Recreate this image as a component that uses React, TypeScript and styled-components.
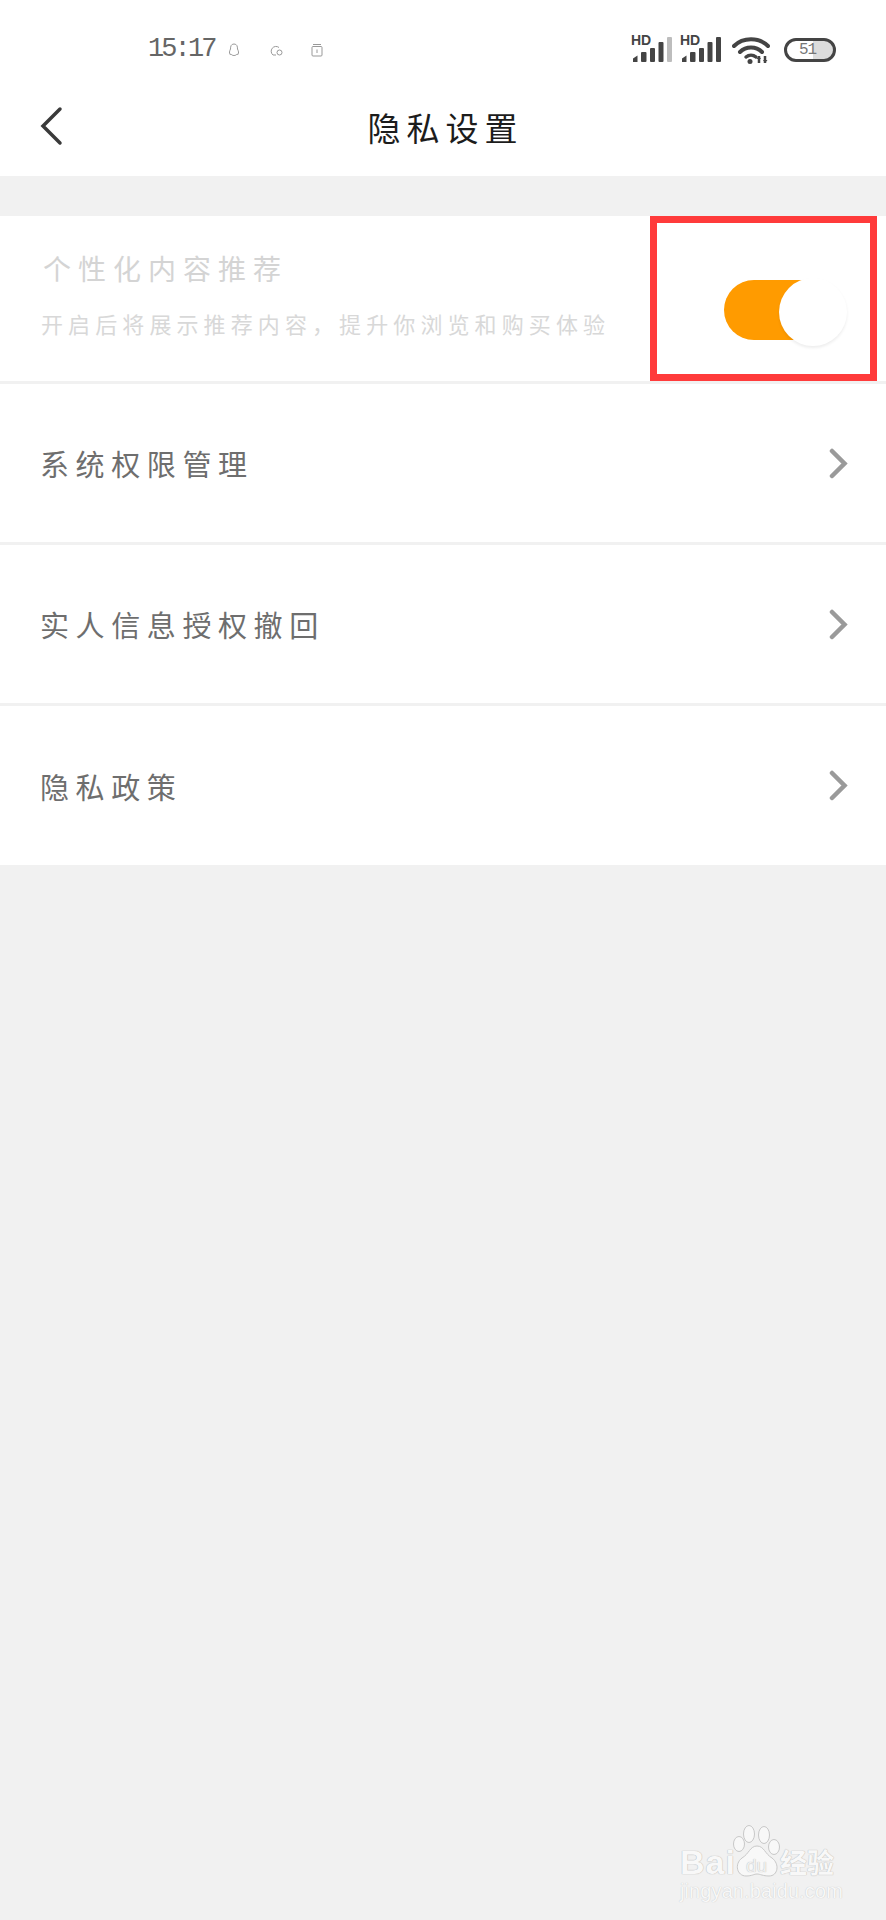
import React from "react";
import styled, { createGlobalStyle } from "styled-components";

const CJK = '"Noto Sans CJK SC", "Noto Sans", sans-serif';

const Global = createGlobalStyle`
  html, body { margin: 0; padding: 0; background: #f1f1f1; }
  body { font-family: ${CJK}; }
`;

const Page = styled.div`
  position: relative;
  width: 886px;
  height: 1920px;
  overflow: hidden;
  background: #f1f1f1;
`;

const TopArea = styled.header`
  background: #fff;
  height: 176px;
  display: flex;
  flex-direction: column;
`;

const StatusBar = styled.div`
  height: 72px;
  padding: 27px 50px 0 148px;
  box-sizing: border-box;
  display: flex;
  align-items: center;
`;

const Clock = styled.span`
  font-family: "Liberation Mono", monospace;
  font-size: 27px;
  line-height: 1;
  letter-spacing: -2.9px;
  color: #666;
  width: 82px;
`;

const TinyIcons = styled.div`
  display: flex;
  align-items: center;
  gap: 28px;
  margin-left: -2px;
`;

const StatusRight = styled.div`
  margin-left: auto;
  display: flex;
  align-items: center;
`;

const SignalWrap = styled.div<{ $gap: number }>`
  position: relative;
  width: 39px;
  height: 26px;
  margin-right: ${(p) => p.$gap}px;
`;

const HdLabel = styled.span`
  position: absolute;
  left: -2px;
  top: -4px;
  font-family: "Liberation Sans", sans-serif;
  font-weight: 700;
  font-size: 14px;
  line-height: 15px;
  color: #444;
`;

const Battery = styled.div`
  width: 52px;
  height: 24px;
  box-sizing: border-box;
  margin-left: 14px;
  border: 3px solid #444;
  border-radius: 12px;
  overflow: hidden;
  display: flex;
  align-items: center;
  background: linear-gradient(to right, #fff 0 56%, #dcdcdc 56% 100%);
`;

const BatteryText = styled.span`
  font-family: "Liberation Mono", monospace;
  font-size: 16px;
  line-height: 1;
  letter-spacing: -1px;
  color: #777;
  margin-left: 12px;
`;

const NavBar = styled.div`
  flex: 1;
  position: relative;
  display: flex;
  align-items: center;
  justify-content: center;
  padding-top: 6px;
  box-sizing: border-box;
`;

const BackButton = styled.div`
  position: absolute;
  left: 40px;
  top: 34px;
  width: 24px;
  height: 40px;
  display: flex;
`;

const PageTitle = styled.h1`
  margin: 0 0 0 5px;
  font-size: 33px;
  font-weight: 400;
  line-height: 40px;
  letter-spacing: 6px;
  color: #1c1c1c;
  font-family: ${CJK};
`;

const List = styled.main`
  margin-top: 40px;
  display: flex;
  flex-direction: column;
  gap: 3px;
`;

const Row = styled.div<{ $height: number }>`
  height: ${(p) => p.$height}px;
  background: #fff;
  display: flex;
  align-items: center;
  justify-content: space-between;
  box-sizing: border-box;
  padding: 0 38px 0 40px;
`;

const RowLabel = styled.span`
  font-size: 29px;
  line-height: 36px;
  letter-spacing: 6.6px;
  font-weight: 400;
  color: #6e6e6e;
`;

const ToggleRow = styled(Row)`
  padding: 0 37px 0 41px;
`;

const RowText = styled.div`
  display: flex;
  flex-direction: column;
  margin-top: -11px;
`;

const DisabledTitle = styled.span`
  margin-left: 2px;
  font-size: 28px;
  line-height: 36px;
  letter-spacing: 7px;
  color: #d4d4d4;
`;

const DisabledSub = styled.span`
  margin-top: 23px;
  font-size: 22px;
  line-height: 28px;
  letter-spacing: 5.1px;
  color: #d8d8d8;
  white-space: nowrap;
`;

const Toggle = styled.div`
  position: relative;
  width: 125px;
  height: 60px;
  margin-top: 22px;
`;

const Track = styled.div`
  width: 90px;
  height: 60px;
  border-radius: 30px 0 0 30px;
  background: #ff9b00;
`;

const Thumb = styled.div`
  position: absolute;
  left: 55px;
  top: -2px;
  width: 68px;
  height: 68px;
  border-radius: 50%;
  background: #fff;
  box-shadow: 0 2px 3px rgba(0, 0, 0, 0.07);
`;

const Highlight = styled.div`
  position: absolute;
  left: 650px;
  top: 216px;
  width: 227px;
  height: 165px;
  box-sizing: border-box;
  border: 7px solid #ff3b3b;
  pointer-events: none;
`;

const Watermark = styled.div`
  position: absolute;
  left: 680px;
  top: 1824px;
  width: 160px;
  height: 78px;
`;

const WmBai = styled.span`
  position: absolute;
  left: 0;
  top: 20px;
  font-family: "Liberation Sans", sans-serif;
  font-weight: 700;
  font-size: 34px;
  line-height: 36px;
  letter-spacing: 1px;
  color: #f8f8f8;
  text-shadow: 0 0 1px #bbb, 0 0 1px #bbb;
`;

const WmCjk = styled.span`
  position: absolute;
  left: 100px;
  top: 22px;
  font-weight: 700;
  font-size: 27px;
  line-height: 32px;
  color: #f8f8f8;
  text-shadow: 0 0 1px #bbb, 0 0 1px #bbb;
`;

const WmDu = styled.span`
  position: absolute;
  left: 66px;
  top: 32px;
  font-family: "Liberation Sans", sans-serif;
  font-size: 19px;
  line-height: 20px;
  color: #f1f1f1;
  text-shadow: 0 0 1px #aaa;
`;

const WmUrl = styled.span`
  position: absolute;
  left: 0;
  top: 56px;
  font-family: "Liberation Sans", sans-serif;
  font-size: 20px;
  line-height: 22px;
  letter-spacing: 0.1px;
  color: #f8f8f8;
  text-shadow: 0 0 1px #bbb;
  white-space: nowrap;
`;

const PawSvg = styled.svg`
  position: absolute;
  left: 52px;
  top: 0;
`;

const Chevron = () => (
  <svg width="19" height="31" viewBox="0 0 19 31" fill="none">
    <path d="M3 3 L15.5 15.5 L3 28" stroke="#9a9a9a" strokeWidth="4.5" strokeLinecap="round" strokeLinejoin="miter" />
  </svg>
);

const Signal = ({ dim }: { dim?: boolean }) => (
  <svg width="39" height="26" viewBox="0 0 39 26" style={{ position: "absolute", left: 0, top: 0 }}>
    <path d="M0 25 V21.5 L4.5 18.5 V25 Z" fill="#444" />
    <rect x="8" y="15" width="5.5" height="10" rx="1" fill="#444" />
    <rect x="17" y="11" width="5" height="14" rx="1" fill="#444" />
    <rect x="25.5" y="5" width="5" height="20" rx="1" fill="#444" />
    <rect x="34" y="0" width="5" height="25" rx="1" fill={dim ? "#bdbdbd" : "#444"} />
  </svg>
);

export default function App() {
  return (
    <Page>
      <Global />
      <TopArea>
        <StatusBar>
          <Clock>15:17</Clock>
          <TinyIcons>
            <svg width="12" height="14" viewBox="0 0 12 14" fill="none" stroke="#999" strokeWidth="1">
              <path d="M6 1 C3 1 2.5 3.5 2.5 6 C1.5 8 1 10 2 11.5 L3 11 C4 13 8 13 9 11 L10 11.5 C11 10 10.5 8 9.5 6 C9.5 3.500 9 1 6 1 Z" />
            </svg>
            <svg width="15" height="15" viewBox="0 0 15 15" fill="none" stroke="#999" strokeWidth="1">
              <path d="M8 13 H5 A4.500 4.500 0 1 1 11 5.500" />
              <circle cx="11.500" cy="10.500" r="2.500" />
            </svg>
            <svg width="12" height="14" viewBox="0 0 12 14" fill="none" stroke="#999" strokeWidth="1">
              <path d="M2 1.500 H10" />
              <rect x="1" y="3.500" width="10" height="9.500" rx="1" />
              <path d="M6 6.500 V10" />
            </svg>
          </TinyIcons>
          <StatusRight>
            <SignalWrap $gap={10}>
              <Signal dim />
              <HdLabel>HD</HdLabel>
            </SignalWrap>
            <SignalWrap $gap={11}>
              <Signal />
              <HdLabel>HD</HdLabel>
            </SignalWrap>
            <svg width="38" height="28" viewBox="0 0 38 28" fill="none">
              <path d="M2 10 C11 1 27 1 36 10" stroke="#444" strokeWidth="4" strokeLinecap="round" />
              <path d="M8 16 C14 10 24 10 30 16" stroke="#444" strokeWidth="4" strokeLinecap="round" />
              <path d="M14 21 C17 18.500 21 18.500 24 21" stroke="#444" strokeWidth="3.500" strokeLinecap="round" />
              <circle cx="18" cy="25.500" r="2.500" fill="#444" />
              <path d="M27 20 V27 M33 20 V27" stroke="#444" strokeWidth="2.500" />
              <path d="M24.500 23 L27 20 L29 23 M31 24 L33 27 L35.500 24" fill="#444" />
            </svg>
            <Battery>
              <BatteryText>51</BatteryText>
            </Battery>
          </StatusRight>
        </StatusBar>
        <NavBar>
          <BackButton>
            <svg width="24" height="40" viewBox="0 0 24 40" fill="none">
              <path d="M20 3 L3 20 L20 37" stroke="#3a3a3a" strokeWidth="3.500" strokeLinecap="round" />
            </svg>
          </BackButton>
          <PageTitle>隐私设置</PageTitle>
        </NavBar>
      </TopArea>
      <List>
        <ToggleRow $height={165}>
          <RowText>
            <DisabledTitle>个性化内容推荐</DisabledTitle>
            <DisabledSub>开启后将展示推荐内容，提升你浏览和购买体验</DisabledSub>
          </RowText>
          <Toggle>
            <Track />
            <Thumb />
          </Toggle>
        </ToggleRow>
        <Row $height={158}>
          <RowLabel>系统权限管理</RowLabel>
          <Chevron />
        </Row>
        <Row $height={158}>
          <RowLabel>实人信息授权撤回</RowLabel>
          <Chevron />
        </Row>
        <Row $height={159}>
          <RowLabel>隐私政策</RowLabel>
          <Chevron />
        </Row>
      </List>
      <Highlight />
      <Watermark>
        <WmBai>Bai</WmBai>
        <PawSvg width="50" height="56" viewBox="0 0 50 56" fill="#f8f8f8" stroke="#c8c8c8" strokeWidth="1">
          <ellipse cx="17" cy="10" rx="5.500" ry="8.500" />
          <ellipse cx="32" cy="11" rx="5.500" ry="8.500" />
          <ellipse cx="7" cy="20" rx="5.500" ry="7.500" />
          <ellipse cx="42" cy="23" rx="5.500" ry="7.500" />
          <path d="M25 22 C18 22 17 30 10 34 C2 40 5 52 14 52 C20 52 22 50 25 50 C28 50 31 52 37 52 C46 52 48 40 40 34 C33 30 32 22 25 22 Z" />
        </PawSvg>
        <WmDu>du</WmDu>
        <WmCjk>经验</WmCjk>
        <WmUrl>jingyan.baidu.com</WmUrl>
      </Watermark>
    </Page>
  );
}
